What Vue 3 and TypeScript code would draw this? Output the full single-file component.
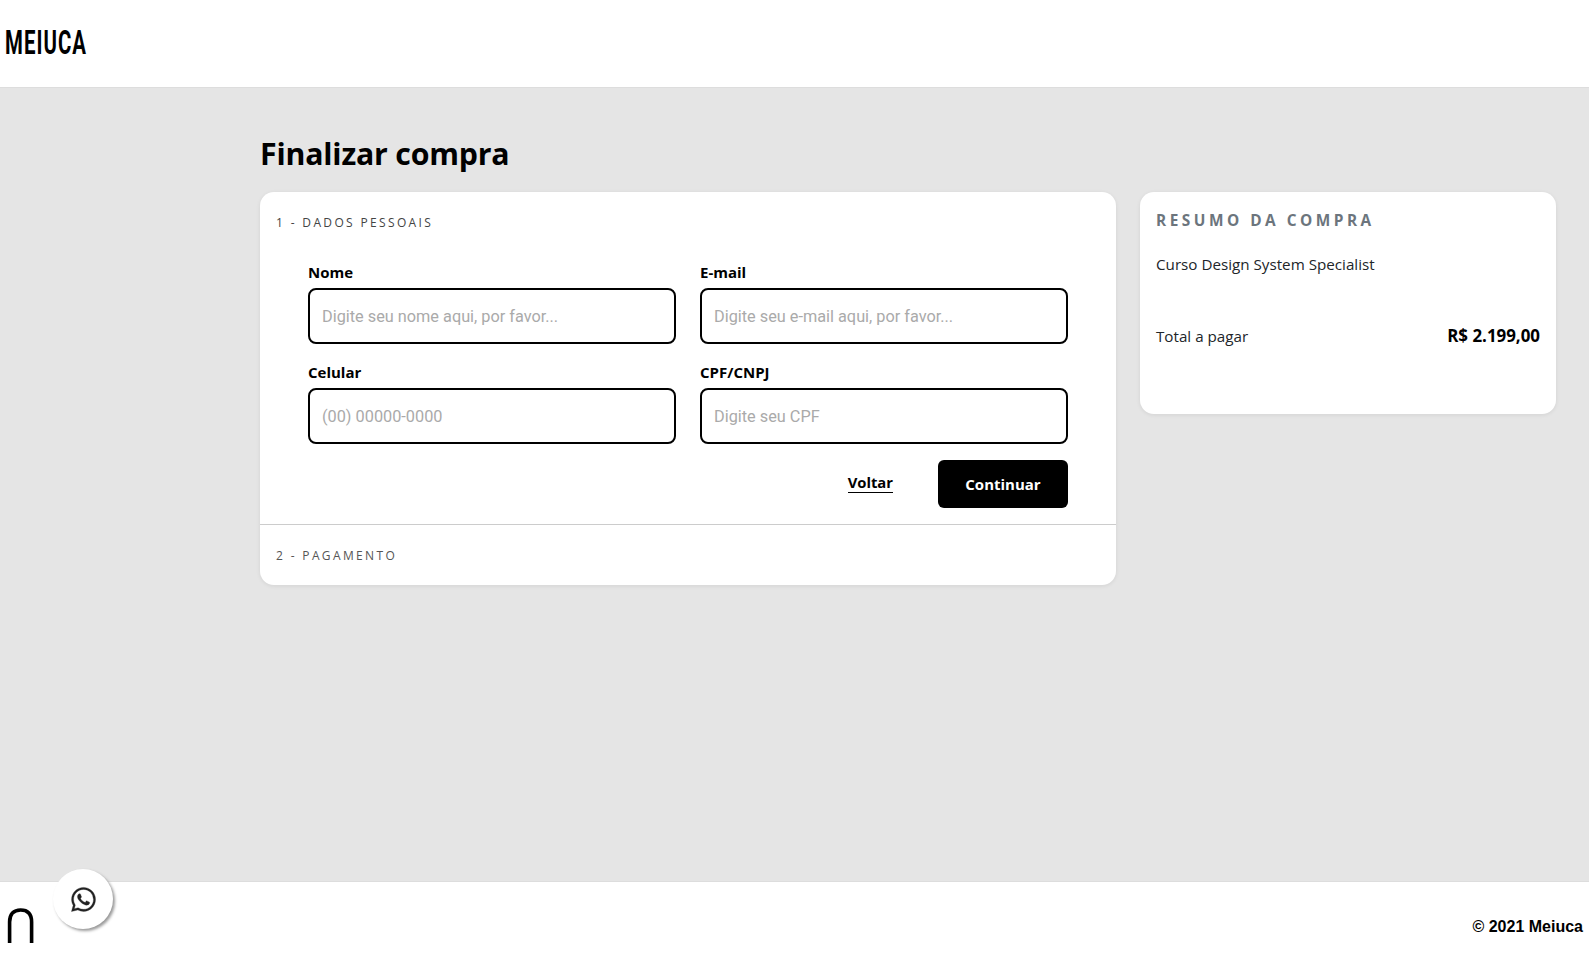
<script setup lang="ts">
interface Field { label: string; placeholder: string }
const fields: Field[] = [
  { label: 'Nome', placeholder: 'Digite seu nome aqui, por favor...' },
  { label: 'E-mail', placeholder: 'Digite seu e-mail aqui, por favor...' },
  { label: 'Celular', placeholder: '(00) 00000-0000' },
  { label: 'CPF/CNPJ', placeholder: 'Digite seu CPF' },
]
</script>

<template>
  <div class="page">
    <header class="top">
      <svg class="logo" width="84" height="40" viewBox="0 0 84 40" role="img" aria-label="MEIUCA">
        <text x="0" y="30" transform="scale(0.6 1)" textLength="135" lengthAdjust="spacing">MEIUCA</text>
      </svg>
    </header>

    <main class="main">
      <div class="wrap">
        <h1 class="title">Finalizar compra</h1>
        <div class="cols">
          <section class="card checkout">
            <h2 class="step">1 - DADOS PESSOAIS</h2>
            <form class="form" @submit.prevent>
              <div class="grid">
                <label v-for="f in fields" :key="f.label" class="field">
                  <span class="label">{{ f.label }}</span>
                  <input class="input" type="text" :placeholder="f.placeholder" />
                </label>
              </div>
              <div class="actions">
                <a class="back">Voltar</a>
                <button class="continue" type="submit">Continuar</button>
              </div>
            </form>
            <h2 class="step step-two">2 - PAGAMENTO</h2>
          </section>

          <aside class="card summary">
            <h3 class="summary-title">RESUMO DA COMPRA</h3>
            <p class="product">Curso Design System Specialist</p>
            <div class="total">
              <span>Total a pagar</span>
              <strong>R$ 2.199,00</strong>
            </div>
          </aside>
        </div>
      </div>
    </main>

    <footer class="bottom">
      <svg class="mark" width="28" height="36" viewBox="0 0 28 36" fill="none" aria-hidden="true">
        <path d="M2.6 35V14C2.6 6 6.6 2 13.6 2S24.6 6 24.6 14V35" stroke="#000" stroke-width="3.6" />
      </svg>
      <span class="copy">© 2021 Meiuca</span>
    </footer>

    <a class="whats" aria-label="WhatsApp">
      <svg width="29" height="29" viewBox="0 0 24 24" fill="#222" stroke="#222" stroke-width="0.25" aria-hidden="true">
        <path d="M19.05 4.91A9.82 9.82 0 0 0 12.04 2C6.58 2 2.13 6.45 2.13 11.91c0 1.75.46 3.45 1.32 4.95L2.05 22l5.25-1.38a9.9 9.9 0 0 0 4.74 1.21c5.46 0 9.91-4.45 9.91-9.91 0-2.65-1.03-5.14-2.9-7.01zm-7.01 15.24a8.23 8.23 0 0 1-4.2-1.15l-.3-.18-3.12.82.83-3.04-.2-.31a8.18 8.18 0 0 1-1.26-4.38c0-4.54 3.7-8.24 8.24-8.24 2.2 0 4.27.86 5.82 2.42a8.18 8.18 0 0 1 2.41 5.83c.01 4.54-3.68 8.23-8.22 8.23zm4.52-6.16c-.25-.12-1.47-.72-1.69-.81-.23-.08-.39-.12-.56.12-.17.25-.64.81-.78.97-.14.17-.29.19-.54.06-.25-.12-1.05-.39-1.99-1.23-.74-.66-1.23-1.47-1.38-1.72-.14-.25-.02-.38.11-.51.11-.11.25-.29.37-.43s.17-.25.25-.41c.08-.17.04-.31-.02-.43s-.56-1.34-.76-1.84c-.2-.48-.41-.42-.56-.43h-.48c-.17 0-.43.06-.66.31-.22.25-.86.85-.86 2.07 0 1.22.89 2.4 1.01 2.56.12.17 1.75 2.67 4.23 3.74.59.26 1.05.41 1.41.52.59.19 1.13.16 1.56.1.48-.07 1.47-.6 1.67-1.18.21-.58.21-1.07.14-1.18s-.22-.16-.47-.28z" />
      </svg>
    </a>
  </div>
</template>

<style>
html, body { margin: 0; background: #fff; }
</style>

<style scoped>
.page {
  height: 969px;
  display: flex;
  flex-direction: column;
  font-family: "Open Sans", "Noto Sans", sans-serif;
  color: #000;
  position: relative;
  overflow: hidden;
}
.top {
  height: 87px;
  flex: none;
  background: #fff;
  display: flex;
  align-items: center;
  padding-left: 5px;
  box-sizing: border-box;
}
.logo { overflow: visible; }
.logo text {
  font-family: "Roboto", sans-serif;
  font-size: 34px;
  font-weight: 700;
  fill: #000;
}
.main {
  flex: 1;
  background: #e5e5e5;
  border-top: 1px solid #ddd;
}
.wrap { margin-left: 260px; width: 1297px; }
.title {
  margin: 0;
  padding-top: 44px;
  height: 60px;
  box-sizing: content-box;
  font-size: 30.3px;
  line-height: 44px;
  font-weight: 700;
  letter-spacing: -0.2px;
}
.cols { display: flex; gap: 24px; align-items: flex-start; }
.card {
  background: #fff;
  border-radius: 14px;
  box-shadow: 0 1px 4px rgba(0, 0, 0, 0.08);
}
.checkout { width: 856px; height: 393px; }
.step {
  margin: 0;
  padding: 23px 16px 0;
  font-size: 12px;
  line-height: 16px;
  font-weight: 400;
  letter-spacing: 2.35px;
  color: #444;
}
.form {
  padding: 30px 48px 16px;
  border-bottom: 1px solid #ccc;
}
.grid {
  display: grid;
  grid-template-columns: 368px 368px;
  column-gap: 24px;
  row-gap: 17px;
}
.field { display: flex; flex-direction: column; }
.label {
  font-size: 15px;
  line-height: 22px;
  font-weight: 700;
  margin-bottom: 5px;
}
.input {
  height: 56px;
  box-sizing: border-box;
  border: 2px solid #000;
  border-radius: 8px;
  padding: 0 12px;
  font-family: "Roboto", sans-serif;
  font-size: 16.3px;
  outline: none;
  background: #fff;
}
.input::placeholder { color: #aaa; opacity: 1; }
.actions {
  display: flex;
  justify-content: flex-end;
  align-items: center;
  gap: 45px;
  margin-top: 16px;
}
.back {
  font-size: 14.8px;
  line-height: 20px;
  font-weight: 700;
  border-bottom: 1px solid #000;
  margin-top: -3px;
}
.continue {
  width: 130px;
  height: 48px;
  border: 0;
  border-radius: 6px;
  background: #000;
  color: #fff;
  font-family: inherit;
  font-size: 15px;
  font-weight: 700;
}
.step-two { padding-top: 23px; color: #555; }
.summary {
  width: 416px;
  height: 222px;
  box-sizing: border-box;
  padding: 19px 16px;
}
.summary-title {
  margin: 0;
  font-size: 15.4px;
  line-height: 20px;
  font-weight: 700;
  letter-spacing: 3.5px;
  color: #6c757d;
}
.product {
  margin: 22px 0 0;
  font-size: 15.2px;
  line-height: 22px;
  color: #212529;
}
.total {
  display: flex;
  justify-content: space-between;
  align-items: center;
  margin-top: 50px;
  font-size: 15.2px;
  line-height: 22px;
  color: #212529;
}
.total strong { color: #000; font-weight: 700; font-size: 16.9px; }
.bottom {
  height: 88px;
  flex: none;
  box-sizing: border-box;
  border-top: 1px solid #ddd;
  background: #fff;
  display: flex;
  justify-content: space-between;
  padding: 26px 6px 0 7px;
}
.mark { display: block; }
.copy {
  font-family: "Liberation Sans", Arial, sans-serif;
  font-size: 16px;
  font-weight: 700;
  line-height: 18px;
  margin-top: 10px;
}
.whats {
  position: absolute;
  left: 53px;
  top: 869px;
  width: 60px;
  height: 60px;
  border-radius: 50%;
  background: #fff;
  box-shadow: 2px 2px 3px #999;
  display: flex;
  align-items: center;
  justify-content: center;
}
</style>
